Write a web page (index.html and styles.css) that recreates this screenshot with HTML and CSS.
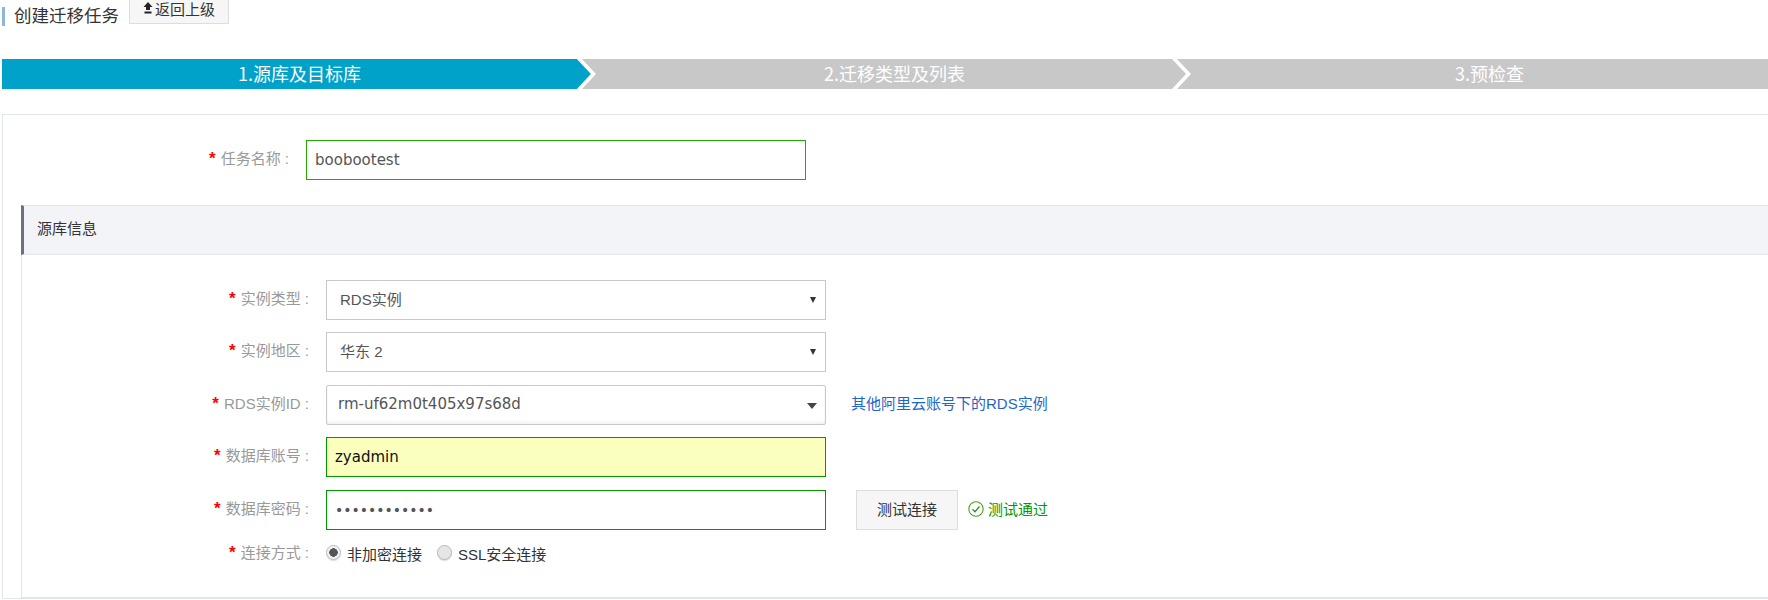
FILE: index.html
```html
<!DOCTYPE html>
<html lang="zh-CN">
<head>
<meta charset="utf-8">
<title>创建迁移任务</title>
<link rel="stylesheet" href="styles.css">
</head>
<body>
<div class="page">
  <header class="topbar">
    <span class="mark"></span>
    <h1 class="title">创建迁移任务</h1>
    <button class="back" type="button">
      <svg class="back-icon" width="10" height="12" viewBox="0 0 10 12"><path d="M5 0 9.5 5H7V8H3V5H.5Z M1.5 9.5H8.500V11.500H1.500Z" fill="#222"/></svg>返回上级
    </button>
  </header>

  <ol class="steps">
    <li class="step step-active"><span class="step-text">1.源库及目标库</span>
      <svg class="chevron" width="20" height="30" viewBox="0 0 20 30"><polygon class="chevron-fill" points="0,0 14,15 0,30"/><polygon points="0,0 5,0 19,15 5,30 0,30 14,15" fill="#fff"/></svg>
    </li>
    <li class="step"><span class="step-text">2.迁移类型及列表</span>
      <svg class="chevron" width="20" height="30" viewBox="0 0 20 30"><polygon points="0,0 5,0 19,15 5,30 0,30 14,15" fill="#fff"/></svg>
    </li>
    <li class="step"><span class="step-text">3.预检查</span></li>
  </ol>

  <main class="panel">
    <div class="row row-task">
      <label class="label label-task"><span class="req">*</span>任务名称 :</label>
      <input class="field field-ok" type="text" value="boobootest" readonly>
    </div>

    <section class="section">
      <h2 class="section-head">源库信息</h2>
      <div class="section-body">
        <div class="row gap-s">
          <label class="label"><span class="req">*</span>实例类型 :</label>
          <div class="select">RDS实例</div>
        </div>
        <div class="row gap-l">
          <label class="label"><span class="req">*</span>实例地区 :</label>
          <div class="select">华东 2</div>
        </div>
        <div class="row gap-s">
          <label class="label"><span class="req">*</span>RDS实例ID :</label>
          <div class="select select-chosen">rm-uf62m0t405x97s68d</div>
          <a class="link" href="#">其他阿里云账号下的RDS实例</a>
        </div>
        <div class="row gap-l">
          <label class="label"><span class="req">*</span>数据库账号 :</label>
          <input class="field field-valid field-auto" type="text" value="zyadmin" readonly>
        </div>
        <div class="row">
          <label class="label"><span class="req">*</span>数据库密码 :</label>
          <input class="field field-valid field-pass" type="password" value="123456789012" readonly>
          <button class="test" type="button"><span class="test-text">测试连接</span></button>
          <span class="passed">
            <svg width="16" height="16" viewBox="0 0 16 16"><circle cx="8" cy="8" r="7.200" fill="none" stroke="#4e9f1c" stroke-width="1.100"/><path d="M4.500 8.200 7 10.700 11.500 5.500" fill="none" stroke="#2e8b2e" stroke-width="1.300"/></svg>测试通过
          </span>
        </div>
        <div class="row row-radio">
          <label class="label"><span class="req">*</span>连接方式 :</label>
          <label class="radio-item"><input class="radio" type="radio" name="conn" checked><span class="radio-text">非加密连接</span></label>
          <label class="radio-item"><input class="radio" type="radio" name="conn"><span class="radio-text">SSL安全连接</span></label>
        </div>
      </div>
    </section>
  </main>
</div>
</body>
</html>
```
FILE: styles.css
```css
html, body {
  margin: 0;
  padding: 0;
  height: 600px;
  overflow: hidden;
  background: #fff;
}

body {
  font-family: "DejaVu Sans", "Noto Sans CJK SC", sans-serif;
  font-size: 15px;
  color: #333;
}

.page {
  width: 1800px;
  margin-left: 2px;
}

/* top bar */
.topbar {
  display: flex;
  align-items: flex-start;
  height: 70px;
  margin-top: -11px;
}

.mark {
  width: 3px;
  height: 19px;
  margin-top: 18px;
  background: #8db6dc;
}

.title {
  margin: 14px 10px 0 9px;
  font-family: "Noto Sans CJK SC", sans-serif;
  font-size: 17.500px;
  font-weight: 400;
  line-height: 24px;
  color: #333;
}

.back {
  display: flex;
  align-items: center;
  justify-content: center;
  gap: 2px;
  width: 100px;
  height: 35px;
  padding: 3px 0 0;
  border: 1px solid #ddd;
  background: #f6f6f6;
  font-family: "Noto Sans CJK SC", sans-serif;
  font-size: 15px;
  color: #333;
}

.back-icon {
  flex: none;
}

/* steps */
.steps {
  display: flex;
  width: 1785px;
  height: 30px;
  margin: 0;
  padding: 0;
  list-style: none;
}

.step {
  position: relative;
  width: 595px;
  flex: none;
  background: #c8c8c8;
  color: #fff;
  font-family: "Noto Sans CJK SC", sans-serif;
  font-size: 18px;
  line-height: 28px;
  text-align: center;
}

.step-active {
  background: #00a2ca;
}

.chevron {
  position: absolute;
  top: 0;
  right: 0;
  background: #c8c8c8;
}

.chevron-fill {
  fill: #00a2ca;
}

/* panel */
.panel {
  margin-top: 25px;
  padding-top: 25px;
  border: 1px solid #e1e6eb;
  border-right: 0;
}

.row {
  display: flex;
  align-items: center;
  height: 40px;
}

.gap-s {
  margin-bottom: 12px;
}

.gap-l {
  margin-bottom: 13px;
}

.label {
  flex: none;
  width: 304px;
  padding: 0 17px 4px 0;
  box-sizing: border-box;
  text-align: right;
  color: #999;
  font-size: 15px;
  font-family: "Liberation Sans", "Noto Sans CJK SC", sans-serif;
}

.label-task {
  width: 303px;
  padding-right: 17px;
}

.req {
  margin-right: 5px;
  color: #f00;
  font-size: 17px;
  font-weight: 700;
}

.field {
  flex: none;
  box-sizing: border-box;
  width: 500px;
  height: 40px;
  padding: 0 8px;
  border: 1px solid #090;
  outline: 0;
  background: #fff;
  color: #555;
  font-family: "DejaVu Sans", sans-serif;
  font-size: 15px;
}

.field-ok {
  border-color: #22aa00;
}

.field-auto {
  background: #fbffbd;
  color: #111;
}

.field-pass {
  font-size: 14px;
}

/* section */
.section {
  margin: 25px 0 0 18px;
}

.section-head {
  height: 50px;
  margin: 0;
  padding-left: 13px;
  box-sizing: border-box;
  border-top: 1px solid #e1e6eb;
  border-bottom: 1px solid #e1e6eb;
  border-left: 3px solid #6f6f80;
  background: #f2f4f8;
  font-family: "Noto Sans CJK SC", sans-serif;
  font-size: 15px;
  font-weight: 400;
  line-height: 44px;
  color: #333;
}

.section-body {
  height: 343px;
  padding-top: 25px;
  box-sizing: border-box;
  border-left: 1px solid #e1e6eb;
  border-bottom: 1px solid #e1e6eb;
}

.select {
  position: relative;
  flex: none;
  box-sizing: border-box;
  width: 500px;
  height: 40px;
  padding-left: 13px;
  border: 1px solid #c8c8c8;
  background: #fff;
  color: #555;
  font-family: "Liberation Sans", "Noto Sans CJK SC", sans-serif;
  font-size: 15px;
  line-height: 38px;
}

.select::after {
  content: "";
  position: absolute;
  top: 16px;
  right: 9px;
  border-top: 6px solid #333;
  border-left: 3px solid transparent;
  border-right: 3px solid transparent;
}

.select-chosen {
  padding-left: 11px;
  border-radius: 2px;
  box-shadow: inset 0 -2px 3px rgba(0, 0, 0, .06);
  font-family: "DejaVu Sans", "Noto Sans CJK SC", sans-serif;
  font-size: 15px;
  line-height: 36px;
}

.select-chosen::after {
  top: 17px;
  right: 8px;
  border-top-width: 6px;
  border-top-color: #444;
  border-left-width: 5px;
  border-right-width: 5px;
}

.link {
  margin: 0 0 5px 25px;
  color: #1f66c9;
  font-family: "Liberation Sans", "Noto Sans CJK SC", sans-serif;
  font-size: 15px;
  text-decoration: none;
}

.test {
  width: 102px;
  height: 40px;
  margin-left: 30px;
  padding: 0 0 3px;
  border: 1px solid #ddd;
  background: #f6f6f6;
  color: #333;
  font-family: "Noto Sans CJK SC", sans-serif;
  font-size: 15px;
}

.passed {
  display: flex;
  align-items: center;
  gap: 4px;
  margin: 0 0 3px 10px;
  color: #090;
  font-family: "Noto Sans CJK SC", sans-serif;
  font-size: 15px;
}

.row-radio {
  height: 44px;
}

.row-radio .label {
  padding-bottom: 1px;
}

.radio-item {
  display: flex;
  align-items: center;
  margin-right: 15px;
  color: #333;
  font-family: "Liberation Sans", "Noto Sans CJK SC", sans-serif;
  font-size: 15px;
}

.radio-text {
  padding-top: 2px;
}

.radio {
  appearance: none;
  width: 15px;
  height: 15px;
  margin: 0 6px 0 0;
  border: 1px solid #bbb;
  border-radius: 50%;
  background: #e6e6e6;
  box-shadow: 0 1px 1px rgba(0, 0, 0, .15);
}

.radio:checked {
  background: radial-gradient(circle, #555 0 4px, #f2f2f2 4.500px);
}
```
